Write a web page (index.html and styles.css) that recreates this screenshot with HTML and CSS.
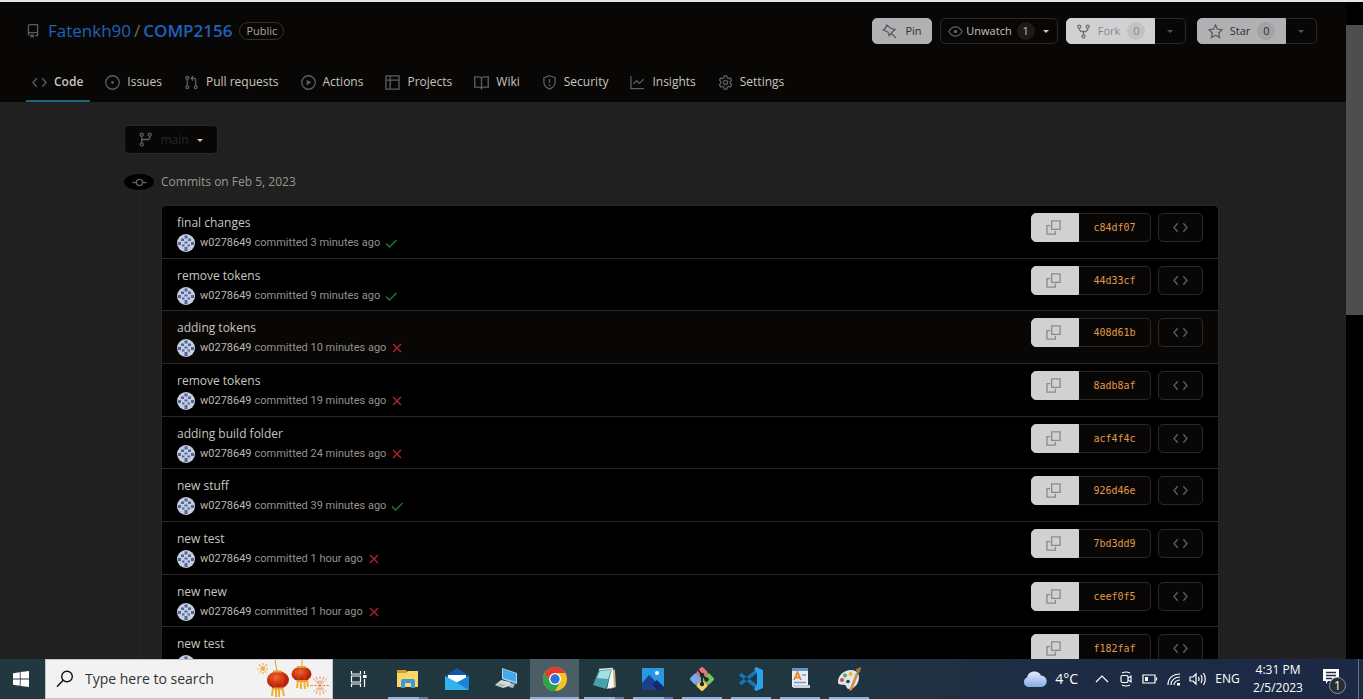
FILE: index.html
```html
<!DOCTYPE html>
<html lang="en">
<head>
<meta charset="utf-8">
<title>Commits · Fatenkh90/COMP2156</title>
<link rel="stylesheet" href="styles.css">
</head>
<body>
<svg class="sprite" aria-hidden="true">
  <symbol id="repo" viewBox="0 0 16 16"><path fill="currentColor" d="M2 2.5A2.5 2.5 0 0 1 4.5 0h8.75a.75.75 0 0 1 .75.75v12.5a.75.75 0 0 1-.75.75h-2.5a.75.75 0 0 1 0-1.5h1.75v-2h-8a1 1 0 0 0-.714 1.7.75.75 0 1 1-1.072 1.05A2.495 2.495 0 0 1 2 11.5Zm10.5-1h-8a1 1 0 0 0-1 1v6.708A2.486 2.486 0 0 1 4.5 9h8ZM5 12.25a.25.25 0 0 1 .25-.25h3.5a.25.25 0 0 1 .25.25v3.25a.25.25 0 0 1-.4.2l-1.45-1.087a.249.249 0 0 0-.3 0L5.4 15.7a.25.25 0 0 1-.4-.2Z"/></symbol>
  <symbol id="code" viewBox="0 0 16 16"><path class="line" d="M5 3.5 1 8l4 4.500M11 3.500 15 8l-4 4.500"/></symbol>
  <symbol id="issue" viewBox="0 0 16 16"><circle class="line" cx="8" cy="8" r="7.200"/><circle cx="8" cy="8" r="1.500" fill="currentColor"/></symbol>
  <symbol id="pull" viewBox="0 0 16 16"><g class="line"><circle cx="3.500" cy="3" r="1.500"/><circle cx="3.500" cy="13" r="1.500"/><circle cx="12.500" cy="13" r="1.500"/><path d="M3.500 4.500v7M12.500 11.500V5a1.500 1.500 0 0 0-1.500-1.500H8M10 1 7.600 3.500 10 6"/></g></symbol>
  <symbol id="play" viewBox="0 0 16 16"><circle class="line" cx="8" cy="8" r="7.200"/><path fill="currentColor" d="M6 5v6l5-3z"/></symbol>
  <symbol id="table" viewBox="0 0 16 16"><path class="line" d="M1 1h14v14H1zM1 5.500h14M5.500 1v14"/></symbol>
  <symbol id="book" viewBox="0 0 16 16"><path class="line" d="M8 3.500C7.500 2.500 6.500 2 5.500 2H.800v11h5c1 0 1.700.5 2.200 1.500.5-1 1.200-1.500 2.200-1.500h5V2h-4.700c-1 0-2 .5-2.500 1.500zm0 0v11"/></symbol>
  <symbol id="shield" viewBox="0 0 16 16"><path class="line" d="m8 .800 6 2V7.500c0 3.500-2.300 6-6 7.600-3.700-1.600-6-4.100-6-7.600V2.800zM8 4.300v4"/><circle cx="8" cy="10.800" r="1" fill="currentColor"/></symbol>
  <symbol id="graph" viewBox="0 0 16 16"><path class="line" d="M1 1v13.500h14M3.500 9.500 7 6l3 3 4.500-4.500"/></symbol>
  <symbol id="gear" viewBox="0 0 16 16"><path class="line" d="M6.700 1h2.600l.5 2 1.300.8 2-.6 1.400 2.300L13 7v1.800l1.500 1.600-1.400 2.300-2-.5-1.300.8-.5 2H6.700l-.5-2-1.300-.8-2 .5-1.400-2.300L3 8.800V7L1.500 5.500l1.400-2.300 2 .6L6.200 3z"/><circle class="line" cx="8" cy="8" r="2.200"/></symbol>
  <symbol id="pin" viewBox="0 0 16 16"><path class="line" d="m5 1 5 4 4 .7-2.700 2.600L7.500 12.500 6.500 8.700 1.200 6.300 3.600 4.500zM9.500 9.500 15 15"/></symbol>
  <symbol id="eye" viewBox="0 0 16 16"><path class="line" d="M.800 8C3 4.500 5.300 3 8 3s5 1.500 7.200 5C13 11.500 10.700 13 8 13S3 11.500.800 8z"/><circle cx="8" cy="8" r="1.900" fill="currentColor"/></symbol>
  <symbol id="fork" viewBox="0 0 16 16"><g class="line"><circle cx="3.500" cy="2.800" r="1.600"/><circle cx="12.500" cy="2.800" r="1.600"/><circle cx="8" cy="13.300" r="1.600"/><path d="M3.500 4.500V6L5.500 8h5l2-2V4.500M8 8v3.500"/></g></symbol>
  <symbol id="star" viewBox="0 0 16 16"><path class="line" d="m8 1 2.100 4.500 4.900.6-3.600 3.400.9 4.900L8 12l-4.300 2.400.9-4.900L1 6.100l4.900-.6z"/></symbol>
  <symbol id="branch" viewBox="0 0 16 16"><g class="line"><circle cx="4" cy="2.800" r="1.600"/><circle cx="4" cy="13.200" r="1.600"/><circle cx="12.500" cy="2.800" r="1.600"/><path d="M4 4.500v7M12.500 4.500V6c0 1.200-.8 2-2 2H6c-1.200 0-2 .8-2 2"/></g></symbol>
  <symbol id="commit" viewBox="0 0 16 16"><circle class="line" cx="8" cy="8" r="3.300"/><path class="line" d="M.500 8h4M11.500 8h4"/></symbol>
  <symbol id="copy" viewBox="0 0 16 16"><path class="line" d="M6 1h9v9H6zM4.500 6H1v9h9v-3.500"/></symbol>
  <symbol id="check" viewBox="0 0 14 14"><path class="line" d="m2 7.500 3.500 3.500L12.500 4"/></symbol>
  <symbol id="cross" viewBox="0 0 14 14"><path class="line" d="m3 3 8 8M11 3l-8 8"/></symbol>
  <symbol id="caret" viewBox="0 0 8 8"><path fill="currentColor" d="M1 3h6L4 6z"/></symbol>
  <symbol id="avatar" viewBox="0 0 18 18"><circle cx="9" cy="9" r="9" fill="#c9ced6"/><path fill="#4a66ae" d="M7.500 1.500h3v3h-3zM4 4.500h3v2.500H4zM11 4.500h3v2.500h-3zM1 8h3v3H1zM14 8h3v3h-3zM7.500 7.500h3v2h-3zM5 10.500h2.500v2H5zM10.500 10.500h2.500v2h-2.500zM7.500 13h3v4h-3z"/></symbol>
</svg>

<div class="window">
  <main class="page">
    <header class="header">
      <div class="title-row">
        <h1 class="repo-title"><svg class="icon repo-icon"><use href="#repo"/></svg><a href="#">Fatenkh90</a><span class="slash">/</span><a class="strong" href="#">COMP2156</a><span class="label">Public</span></h1>
        <div class="actions">
          <button class="btn grey pin"><svg class="icon"><use href="#pin"/></svg>Pin</button>
          <button class="btn watch"><svg class="icon"><use href="#eye"/></svg>Unwatch<span class="count">1</span><svg class="caret"><use href="#caret"/></svg></button>
          <div class="group"><button class="btn light main-action"><svg class="icon"><use href="#fork"/></svg>Fork<span class="count">0</span></button><button class="btn drop" aria-label="Fork options"><svg class="caret"><use href="#caret"/></svg></button></div>
          <div class="group last"><button class="btn grey main-action"><svg class="icon"><use href="#star"/></svg>Star<span class="count">0</span></button><button class="btn drop" aria-label="Star options"><svg class="caret"><use href="#caret"/></svg></button></div>
        </div>
      </div>
      <nav class="tabs">
        <a class="tab selected" href="#"><svg class="icon"><use href="#code"/></svg>Code</a>
        <a class="tab" href="#"><svg class="icon"><use href="#issue"/></svg>Issues</a>
        <a class="tab" href="#"><svg class="icon"><use href="#pull"/></svg>Pull requests</a>
        <a class="tab" href="#"><svg class="icon"><use href="#play"/></svg>Actions</a>
        <a class="tab" href="#"><svg class="icon"><use href="#table"/></svg>Projects</a>
        <a class="tab" href="#"><svg class="icon"><use href="#book"/></svg>Wiki</a>
        <a class="tab" href="#"><svg class="icon"><use href="#shield"/></svg>Security</a>
        <a class="tab" href="#"><svg class="icon"><use href="#graph"/></svg>Insights</a>
        <a class="tab" href="#"><svg class="icon"><use href="#gear"/></svg>Settings</a>
      </nav>
    </header>

    <section class="content">
      <button class="branch"><svg class="icon"><use href="#branch"/></svg>main<svg class="caret"><use href="#caret"/></svg></button>
      <div class="timeline">
        <div class="rail"><span class="node"><svg class="icon"><use href="#commit"/></svg></span></div>
        <div class="group-body">
          <h2 class="day">Commits on Feb 5, 2023</h2>
          <ol class="commits">
            <li class="commit"><div class="info"><a class="message" href="#">final changes</a><div class="meta"><svg class="avatar"><use href="#avatar"/></svg><a href="#">w0278649</a><span>committed 3 minutes ago</span><svg class="status ok"><use href="#check"/></svg></div></div><div class="group"><button class="copy" aria-label="Copy SHA"><svg class="icon"><use href="#copy"/></svg></button><a class="sha" href="#">c84df07</a></div><button class="browse" aria-label="Browse files"><svg class="icon"><use href="#code"/></svg></button></li>
            <li class="commit"><div class="info"><a class="message" href="#">remove tokens</a><div class="meta"><svg class="avatar"><use href="#avatar"/></svg><a href="#">w0278649</a><span>committed 9 minutes ago</span><svg class="status ok"><use href="#check"/></svg></div></div><div class="group"><button class="copy" aria-label="Copy SHA"><svg class="icon"><use href="#copy"/></svg></button><a class="sha" href="#">44d33cf</a></div><button class="browse" aria-label="Browse files"><svg class="icon"><use href="#code"/></svg></button></li>
            <li class="commit active"><div class="info"><a class="message" href="#">adding tokens</a><div class="meta"><svg class="avatar"><use href="#avatar"/></svg><a href="#">w0278649</a><span>committed 10 minutes ago</span><svg class="status bad"><use href="#cross"/></svg></div></div><div class="group"><button class="copy" aria-label="Copy SHA"><svg class="icon"><use href="#copy"/></svg></button><a class="sha" href="#">408d61b</a></div><button class="browse" aria-label="Browse files"><svg class="icon"><use href="#code"/></svg></button></li>
            <li class="commit"><div class="info"><a class="message" href="#">remove tokens</a><div class="meta"><svg class="avatar"><use href="#avatar"/></svg><a href="#">w0278649</a><span>committed 19 minutes ago</span><svg class="status bad"><use href="#cross"/></svg></div></div><div class="group"><button class="copy" aria-label="Copy SHA"><svg class="icon"><use href="#copy"/></svg></button><a class="sha" href="#">8adb8af</a></div><button class="browse" aria-label="Browse files"><svg class="icon"><use href="#code"/></svg></button></li>
            <li class="commit"><div class="info"><a class="message" href="#">adding build folder</a><div class="meta"><svg class="avatar"><use href="#avatar"/></svg><a href="#">w0278649</a><span>committed 24 minutes ago</span><svg class="status bad"><use href="#cross"/></svg></div></div><div class="group"><button class="copy" aria-label="Copy SHA"><svg class="icon"><use href="#copy"/></svg></button><a class="sha" href="#">acf4f4c</a></div><button class="browse" aria-label="Browse files"><svg class="icon"><use href="#code"/></svg></button></li>
            <li class="commit"><div class="info"><a class="message" href="#">new stuff</a><div class="meta"><svg class="avatar"><use href="#avatar"/></svg><a href="#">w0278649</a><span>committed 39 minutes ago</span><svg class="status ok"><use href="#check"/></svg></div></div><div class="group"><button class="copy" aria-label="Copy SHA"><svg class="icon"><use href="#copy"/></svg></button><a class="sha" href="#">926d46e</a></div><button class="browse" aria-label="Browse files"><svg class="icon"><use href="#code"/></svg></button></li>
            <li class="commit"><div class="info"><a class="message" href="#">new test</a><div class="meta"><svg class="avatar"><use href="#avatar"/></svg><a href="#">w0278649</a><span>committed 1 hour ago</span><svg class="status bad"><use href="#cross"/></svg></div></div><div class="group"><button class="copy" aria-label="Copy SHA"><svg class="icon"><use href="#copy"/></svg></button><a class="sha" href="#">7bd3dd9</a></div><button class="browse" aria-label="Browse files"><svg class="icon"><use href="#code"/></svg></button></li>
            <li class="commit"><div class="info"><a class="message" href="#">new new</a><div class="meta"><svg class="avatar"><use href="#avatar"/></svg><a href="#">w0278649</a><span>committed 1 hour ago</span><svg class="status bad"><use href="#cross"/></svg></div></div><div class="group"><button class="copy" aria-label="Copy SHA"><svg class="icon"><use href="#copy"/></svg></button><a class="sha" href="#">ceef0f5</a></div><button class="browse" aria-label="Browse files"><svg class="icon"><use href="#code"/></svg></button></li>
            <li class="commit"><div class="info"><a class="message" href="#">new test</a><div class="meta"><svg class="avatar"><use href="#avatar"/></svg></div></div><div class="group"><button class="copy" aria-label="Copy SHA"><svg class="icon"><use href="#copy"/></svg></button><a class="sha" href="#">f182faf</a></div><button class="browse" aria-label="Browse files"><svg class="icon"><use href="#code"/></svg></button></li>
          </ol>
        </div>
      </div>
    </section>
  </main>
  <div class="scrollbar"><div class="thumb"></div></div>
</div>

<footer class="taskbar">
  <button class="start" aria-label="Start"><svg width="16" height="16" viewBox="0 0 16 16"><path fill="#fff" d="M0 2.200 6.800 1.200v6.400H0zM7.600 1.100 16 0v7.600H7.600zM0 8.400h6.800v6.400L0 13.800zM7.600 8.400H16V16l-8.400-1.100z"/></svg></button>
  <label class="search">
    <svg width="18" height="18" viewBox="0 0 18 18" fill="none" stroke="#111" stroke-width="1.400"><circle cx="11" cy="6.500" r="5.300"/><path d="M7.200 10.300 1 16.800"/></svg>
    <input type="text" placeholder="Type here to search" aria-label="Type here to search">
    <svg width="74" height="38" viewBox="0 0 74 38">
      <defs><radialGradient id="lantern" cx=".4" cy=".35"><stop offset="0" stop-color="#f26a2c"/><stop offset="1" stop-color="#b9210f"/></radialGradient></defs>
      <g stroke="#f0a63a" stroke-width="1.200" stroke-dasharray="2 1"><path d="M7 3v12M1 9h12M3 4.500l8 9M11 4.500l-8 9"/></g><circle cx="7" cy="9" r="2" fill="#f3b24a"/>
      <g stroke="#ee8f62" stroke-width="1" stroke-dasharray="3 1"><path d="M64 16v19M54 25.500h20M57 18.500l14 14M71 18.500l-14 14M60 17l8 17M68 17l-8 17"/></g>
      <path d="M19 0l2 12M46 0v8" stroke="#d89a3a" stroke-width="1"/>
      <path d="M17 27l-1 9M20 27v10M23 27v10M26 27l2 9" stroke="#f0b032" stroke-width="2"/>
      <path d="M42 20l-1 8M45 20v9M48 20l1 9M51 20l1 7" stroke="#f0b032" stroke-width="2"/>
      <ellipse cx="22" cy="20" rx="11" ry="9" fill="url(#lantern)"/><ellipse cx="22" cy="20" rx="5" ry="9" fill="none" stroke="#d9421a"/><path d="M17 11.500h9M18 28.500h9" stroke="#e9a02c" stroke-width="2"/>
      <ellipse cx="45.500" cy="14" rx="10" ry="7.500" fill="url(#lantern)"/><ellipse cx="45.500" cy="14" rx="4" ry="7.500" fill="none" stroke="#d9421a"/><path d="M41 7h9M41 21h9" stroke="#e9a02c" stroke-width="2"/>
    </svg>
  </label>
  <nav class="apps">
    <button class="app" aria-label="Task View"><svg width="18" height="18" viewBox="0 0 18 18" fill="none" stroke="#fff" stroke-width="1.200"><path d="M1.500 1v3h9V1M1.500 17v-3h9v3M1.500 6h9v6h-9zM14.500 1v3M14.500 9v8"/><path fill="#fff" d="M13.500 5.500h2.500v2h-2.500z"/></svg></button>
    <button class="app open multi" aria-label="File Explorer"><svg width="24" height="24" viewBox="0 0 24 24"><path fill="#d99a1c" d="M1 3h9l2 3h-3L1 7z"/><path fill="#fbd667" d="M1 6h9l2-2h10v16H1z"/><path fill="#4198d8" d="M5 14q0-2 2-2h10q2 0 2 2v7h-4v-5H9v5H5z"/></svg></button>
    <button class="app" aria-label="Mail"><svg width="24" height="24" viewBox="0 0 24 24"><path fill="#0d59a8" d="m0 9 12-8 12 8v5H0z"/><path fill="#fff" d="M3 8h18v8H3z"/><path fill="#31b3ee" d="M0 9l12 6.500L24 9v14H0z"/><path fill="#1685d8" d="M24 9v14L8 13.500l4 2z"/></svg></button>
    <button class="app" aria-label="Remote Desktop"><svg width="24" height="24" viewBox="0 0 24 24"><path fill="#bcd3e3" d="m8 1 15 5v11L8 12z"/><path fill="#41a9ee" d="m9 2 13 4.500v8.500L9 11z"/><path fill="#d6dde2" d="m7 13 9 2 2 3-9 3-8-3z"/><path fill="#aebac3" d="m17 16 4 1-2 4-4-1zM5 16l7 2-3 2-6-1z"/></svg></button>
    <button class="app open current" aria-label="Chrome"><svg width="24" height="24" viewBox="0 0 24 24"><circle cx="12" cy="12" r="12" fill="#f3c428"/><path fill="#e33b2e" d="M1.600 6A12 12 0 0 1 22.400 6H12L7 15z"/><path fill="#2ba24c" d="M1.600 6A12 12 0 0 0 12 24l5.200-9L7 15z"/><circle cx="12" cy="12" r="6" fill="#fff"/><circle cx="12" cy="12" r="4.700" fill="#2d72df"/></svg></button>
    <button class="app open multi" aria-label="Notepad"><svg width="24" height="24" viewBox="0 0 24 24"><path fill="#c5ad7a" d="m20 2 3 1 1 17-6 2z"/><path fill="#f0f5f5" d="m19 3 2-1 1 18-7 2z"/><path fill="#4a9fa8" d="M7 3l13-1-6 20-13-4z"/><path fill="#a6dfdf" d="M8 4l11-1-3 9-11-1z"/><path stroke="#dfe8e8" stroke-width="1.500" d="M7 2.500 21 1.500"/></svg></button>
    <button class="app open multi" aria-label="Photos"><svg width="24" height="24" viewBox="0 0 24 24"><path fill="#2698e5" d="M1 1h22v22H1z"/><circle cx="16" cy="6" r="2" fill="#fff"/><path fill="#1e3f8c" d="M1 16 8 8l15 15H1z"/><path fill="#142c68" d="m11 17 5-4 7 7v3h-7z"/></svg></button>
    <button class="app open" aria-label="Git"><svg width="24" height="24" viewBox="0 0 24 24"><g transform="rotate(45 12 12)"><rect x="3" y="3" width="9" height="9" rx="2" fill="#ee7379"/><rect x="12" y="3" width="9" height="9" rx="2" fill="#7ac45a"/><rect x="3" y="12" width="9" height="9" rx="2" fill="#7ea7ea"/><rect x="12" y="12" width="9" height="9" rx="2" fill="#f2d35d"/></g><path fill="none" stroke="#20262a" stroke-width="1.800" d="M8 3l4 5v10M12 8l4 4"/><g fill="#20262a"><circle cx="12" cy="8" r="2.200"/><circle cx="12" cy="17" r="2.200"/><circle cx="16.500" cy="12.500" r="2.200"/></g></svg></button>
    <button class="app open" aria-label="Visual Studio Code"><svg width="24" height="24" viewBox="0 0 24 24"><path fill="#1277bd" d="M0 8.500 2.500 6 19 18.500V23zM0 15.500 2.500 18 19 5.500V1z"/><path fill="#2ba2ec" d="m17 0 7 3v18l-7 3-2-2 3-4V6l-3-4z"/></svg></button>
    <button class="app open" aria-label="WordPad"><svg width="24" height="24" viewBox="0 0 24 24"><path fill="#e8edf3" d="M4 2h16v18H4z"/><path fill="#6493c8" d="M4 1h16v3H4z"/><path fill="none" stroke="#e98431" stroke-width="1.800" d="m6 13 3.500-8 3.500 8M7.500 10.500h4"/><path stroke="#719bd0" stroke-width="1.500" d="M14 8h4M6 15.500h12"/><path fill="#c4d0dc" d="M5 18h17v3H5z"/></svg></button>
    <button class="app open" aria-label="Paint"><svg width="24" height="24" viewBox="0 0 24 24"><path fill="#dbe6ee" d="M1 15C1 8 7 3 14 3c5 0 8 3 8 7 0 6-4 12-10 12-3 0-2-3-4-4s-7 1-7-3z"/><circle cx="5" cy="13" r="2" fill="#d84a3d"/><circle cx="8" cy="8.500" r="2" fill="#55aa4a"/><circle cx="13.500" cy="7" r="2" fill="#efb42e"/><circle cx="11" cy="14.500" r="1.800" fill="#263b46"/><path fill="#d98b3b" d="m19 6 2.500 1L15 23l-3 1z"/><path fill="#a87442" d="m19 2 5-2-1 5-3 2z"/></svg></button>
  </nav>
  <div class="tray">
    <button class="weather"><svg width="25" height="18" viewBox="0 0 25 18"><defs><linearGradient id="cloud" x2="0" y2="1"><stop offset="0" stop-color="#e2ecff"/><stop offset="1" stop-color="#87ace8"/></linearGradient></defs><path fill="url(#cloud)" d="M5 17a5 5 0 0 1-1-9.500A7.500 7.500 0 0 1 18 5.500 5.800 5.800 0 0 1 19 17z"/></svg>4°C</button>
    <button class="tray-icon" aria-label="Show hidden icons"><svg width="16" height="16" viewBox="0 0 16 16"><path d="m2 11 6-6 6 6"/></svg></button>
    <button class="tray-icon" aria-label="Meet Now"><svg width="16" height="16" viewBox="0 0 16 16"><rect x="3" y="4.500" width="7" height="7" rx="1.500"/><path d="m10 7 3-2v6l-3-2M4 2q4-2 8 0M4 14q4 2 8 0"/></svg></button>
    <button class="tray-icon" aria-label="Battery"><svg width="16" height="16" viewBox="0 0 16 16"><path d="M1 4h12v8H1zM14.500 6.500v3"/><path class="solid" d="M3 6h3v4H3z"/></svg></button>
    <button class="tray-icon" aria-label="Wi-Fi"><svg width="16" height="16" viewBox="0 0 16 16"><path d="M2 14C2 7 7 3 14 3M5 14c0-5 4-8 9-8M8 14c0-3 3-5 6-5"/><path class="solid" d="M11 12h3v2.500h-3z"/></svg></button>
    <button class="tray-icon" aria-label="Volume"><svg width="18" height="16" viewBox="0 0 18 16"><path d="M1 6h3l3-3v10l-3-3H1zM9.500 6q1 2 0 4M12 4q2 4 0 8M14.500 2q3.500 6 0 12"/></svg></button>
    <button class="lang">ENG</button>
    <button class="clock"><time>4:31 PM</time><time>2/5/2023</time></button>
    <button class="notify" aria-label="Notifications"><svg width="26" height="26" viewBox="0 0 26 26"><path fill="#fff" d="M1 3h16v12H6l-2 3v-3H1z"/><path stroke="#1d2b45" stroke-width="1.300" d="M4 6.500h10M4 9.500h10M4 12.500h6"/></svg><span class="badge">1</span></button>
    <span class="peek"></span>
  </div>
</footer>
</body>
</html>
```
FILE: styles.css
```css
* { box-sizing: border-box; }
body {
  margin: 0;
  height: 100vh;
  display: flex;
  flex-direction: column;
  overflow: hidden;
  background: #000;
  color: #c9c5bf;
  font: 12px/20px "Open Sans", "Noto Sans", sans-serif;
}
a { color: inherit; text-decoration: none; }
button {
  margin: 0;
  padding: 0;
  border: 0;
  background: none;
  color: inherit;
  font: inherit;
  display: flex;
  align-items: center;
  justify-content: center;
}
svg { display: block; flex: none; }
.sprite { position: absolute; width: 0; height: 0; }
.icon { width: 15px; height: 15px; color: #5a5e66; }
.caret { width: 8px; height: 8px; }
.line { fill: none; stroke: currentColor; stroke-width: 1.4; }

.window { flex: 1; min-height: 0; display: flex; border-top: 2px solid #e4e6e6; }
.page { flex: 1; min-width: 0; overflow: hidden; background: #202020; }
.scrollbar { width: 17px; padding-top: 23px; background: #000; }
.thumb { height: 46%; max-height: 290px; background: #4d4e50; }

.header { background: #080706; padding: 16px 29px 0 26px; }
.title-row { display: flex; justify-content: space-between; align-items: center; }
.repo-title { margin: 0; display: flex; align-items: center; font-size: 17px; line-height: 24px; font-weight: 400; color: #1f61bb; }
.repo-icon { width: 14px; height: 14px; margin-right: 8px; }
.slash { margin: 0 3px; color: #6b6b6b; }
.strong { font-weight: 600; }
.label { margin-left: 7px; padding: 0 6px; border: 1px solid #34302b; border-radius: 9px; font-size: 11px; line-height: 16px; color: #aaa59e; }
.actions { display: flex; gap: 8px; }
.group { display: flex; }
.last { margin-left: 3px; }
.btn { height: 26px; border: 1px solid #2a2927; border-radius: 5px; font-size: 11px; color: #c9c5bf; }
.grey { background: #b0b1b3; border-color: #b0b1b3; color: #2c2f33; }
.light { background: #d0d1d3; border-color: #d0d1d3; color: #858a91; }
.light .icon { color: #77716a; }
.pin { width: 60px; gap: 8px; }
.watch { width: 118px; gap: 3px; }
.watch .caret { margin-left: 4px; }
.main-action { width: 89px; gap: 7px; border-radius: 5px 0 0 5px; }
.drop { width: 31px; border-left: 0; border-radius: 0 5px 5px 0; color: #50545b; }
.count { width: 18px; height: 18px; border-radius: 9px; line-height: 18px; background: #a2a3a5; }
.light .count { background: #c1c2c4; }
.watch .count { margin-left: 2px; background: #1c1b1a; }

.tabs { display: flex; gap: 8px; margin-top: 20px; }
.tab { display: flex; align-items: center; gap: 7px; padding: 0 7px; height: 38px; border-bottom: 2px solid transparent; line-height: 20px; }
.selected { padding-left: 6px; border-color: #1b6777; font-weight: 600; }

.content { padding: 23px 127px 0 124px; }
.branch { width: 94px; height: 29px; gap: 7px; background: #080706; border: 1px solid #2a2725; border-radius: 5px; color: #25282d; }
.branch .caret { color: #c9c5bf; }
.timeline { display: flex; margin-top: 18px; }
.rail { width: 37px; padding-top: 2px; background: linear-gradient(#28251f, #28251f) 15px 0 / 1px 100% no-repeat; }
.node { width: 30px; height: 16px; border-radius: 50%; background: #000; display: flex; align-items: center; justify-content: center; }
.group-body { flex: 1; }
.day { margin: 0 0 13px; font-size: 12px; line-height: 20px; font-weight: 400; color: #9b968e; }
.commits { list-style: none; margin: 0; padding: 0; border: 1px solid #2a2725; border-radius: 5px; background: #000; overflow: hidden; }
.commit { display: flex; align-items: flex-start; gap: 7px; padding: 7px 15px 5px; border-bottom: 1px solid #2a2725; }
.commit:nth-child(3n + 2) { padding-bottom: 4px; }
.active { background: #080706; }
.info { flex: 1; }
.message { display: block; line-height: 20px; }
.meta { display: flex; align-items: center; height: 20px; font: 11px/20px Roboto, "Open Sans", sans-serif; color: #97928a; }
.meta a { margin: 0 3px 0 5px; color: #bdb9b3; }
.avatar { width: 18px; height: 18px; }
.status { width: 14px; height: 14px; margin-left: 4px; }
.ok { color: #1d7a3c; }
.bad { color: #b0232f; }
.copy, .sha, .browse { height: 29px; border: 1px solid #2a2927; }
.copy { width: 48px; padding-right: 3px; border-color: #d0d1d3; border-radius: 5px 0 0 5px; background: #d0d1d3; }
.copy .icon { color: #8f8b85; }
.sha { width: 72px; border-left: 0; border-radius: 0 5px 5px 0; background: #080706; text-align: center; font: 10px/27px "DejaVu Sans Mono", monospace; color: #e0974a; }
.browse { width: 45px; border-radius: 5px; background: #080706; }

.taskbar { height: 40px; flex: none; display: flex; background: linear-gradient(90deg, #213841 0%, #21373f 55%, #1d2b45 80%, #1c2945 100%); color: #fff; }
.start { width: 45px; padding-right: 4px; }
.search { width: 288px; display: flex; align-items: center; gap: 11px; padding: 0 2px 0 10px; border: 1px solid #c4c4c4; background: #f2f2f2; }
.search input { flex: 1; min-width: 0; border: 0; padding: 0; background: none; font: 14px/20px "Open Sans", sans-serif; color: #333; outline: 0; }
.search input::placeholder { color: #333; opacity: 1; }
.apps { display: flex; margin-left: 1px; }
.app { width: 49px; height: 40px; }
.open { background: linear-gradient(#76b9ed, #76b9ed) 50% 100% / 40px 2px no-repeat; }
.multi { background: linear-gradient(90deg, #76b9ed 78%, #4d7fa8 78%) 50% 100% / 40px 2px no-repeat; }
.current { background: linear-gradient(#76b9ed, #76b9ed) 50% 100% / 100% 2px no-repeat, #4b5e66; }
.tray { margin-left: auto; display: flex; align-items: center; }
.weather { gap: 7px; margin-right: 12px; font-size: 14px; }
.tray-icon { width: 24px; height: 40px; }
.tray-icon svg { fill: none; stroke: #fff; stroke-width: 1.2; }
.tray-icon .solid { fill: #fff; stroke: none; }
.lang { width: 35px; }
.clock { width: 66px; flex-direction: column; line-height: 18px; }
.notify { position: relative; width: 47px; height: 40px; }
.badge { position: absolute; left: 18px; top: 18px; width: 17px; height: 17px; border: 1px solid #8d949c; border-radius: 50%; background: #282d35; line-height: 15px; text-align: center; }
.peek { width: 5px; height: 40px; border-left: 1px solid #66708a; }
```
